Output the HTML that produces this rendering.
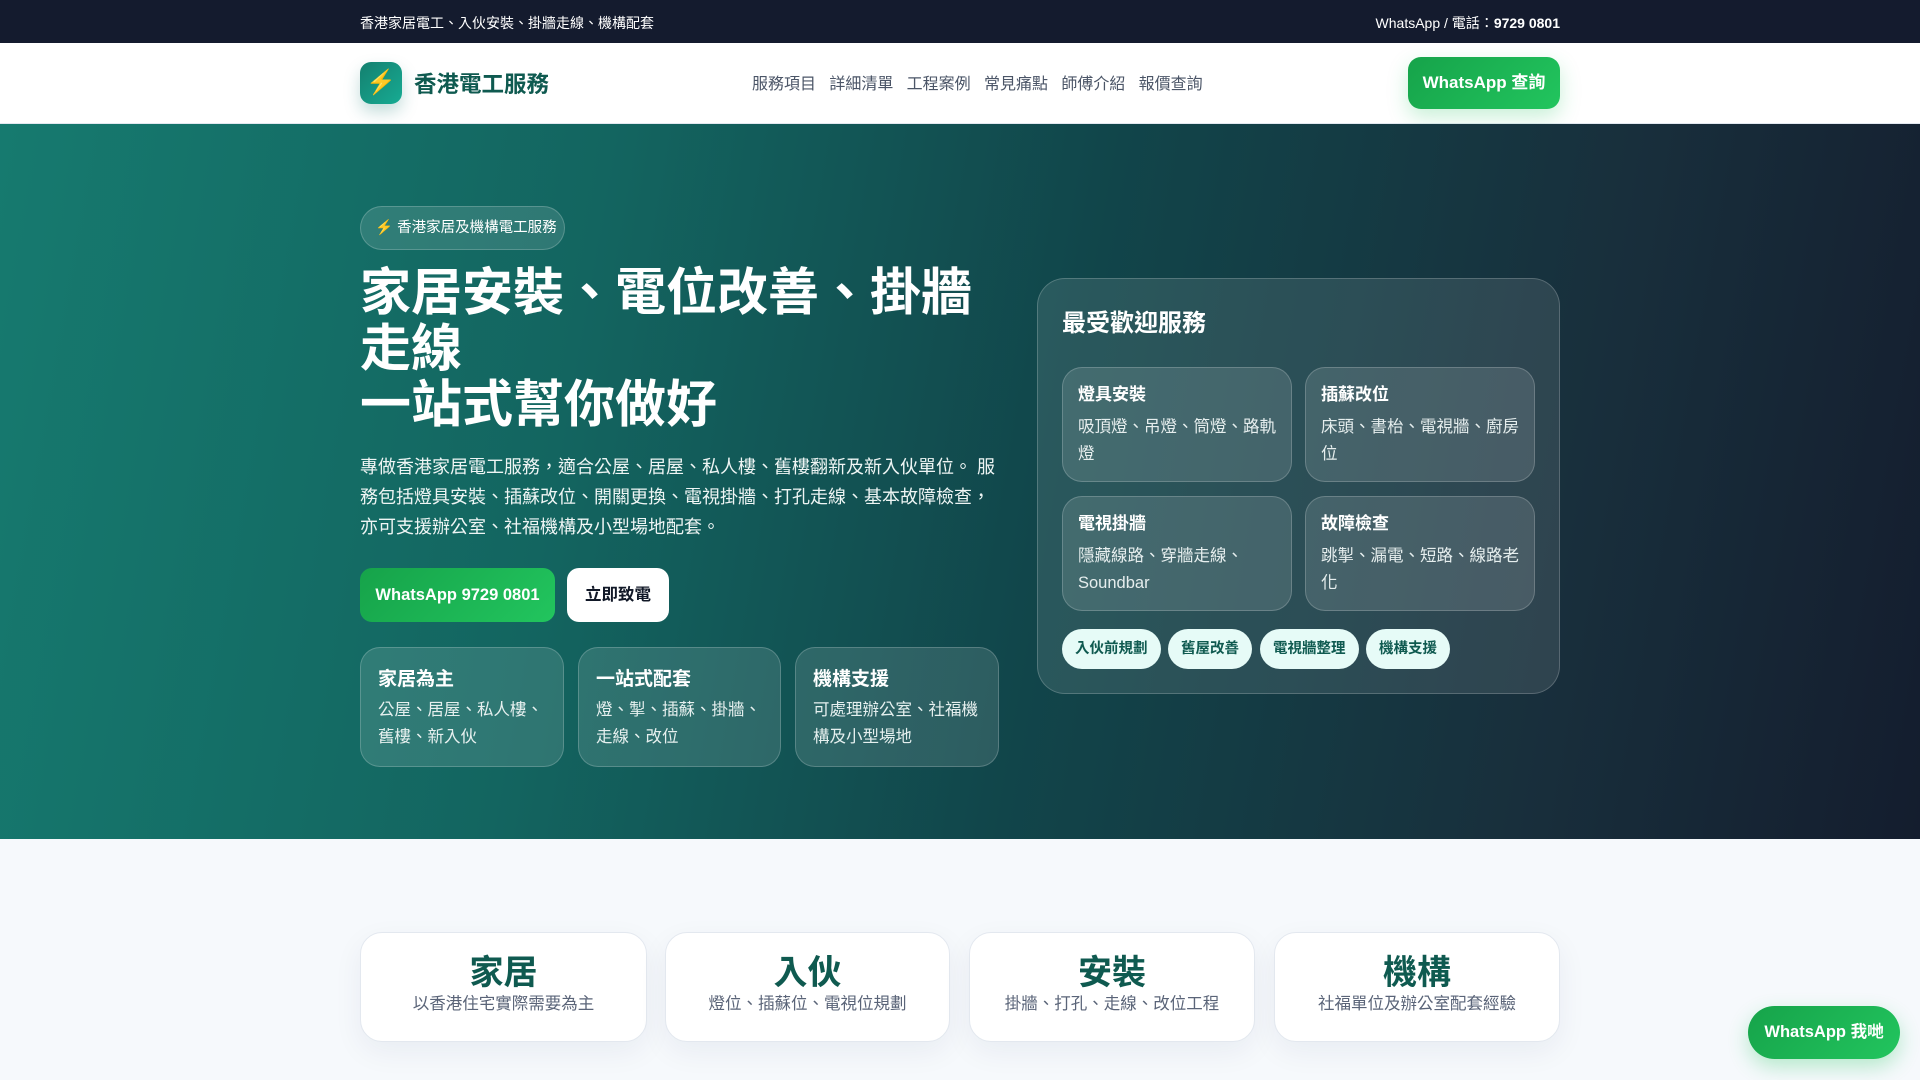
<!DOCTYPE html>
<html><head><meta charset="utf-8"><style>
*{box-sizing:border-box;margin:0;padding:0}
body{width:1920px;height:1080px;overflow:hidden;font-family:"Liberation Sans","Noto Sans CJK TC",sans-serif;background:#f6f9fc;position:relative}
.a{position:absolute}
.top{left:0;top:0;width:1920px;height:43px;background:#141b2e;color:#fff;font-size:14px}
.nav{left:0;top:43px;width:1920px;height:81px;background:#fff;border-bottom:1px solid #e2e8f0}
.hero{left:0;top:124px;width:1920px;height:715px;background:linear-gradient(100deg,#167a6f 0%,#136560 30%,#11454a 55%,#182f3c 80%,#141d2e 100%)}
.glass{background:rgba(255,255,255,0.12);border:1px solid rgba(255,255,255,0.2);border-radius:20px}
.sc h4{font-size:19px;color:#fff;font-weight:700;margin-bottom:6px}
.sc p{font-size:16.5px;line-height:27px;color:#e6f0ef}
.ic h4{font-size:17px;color:#fff;font-weight:700;margin-bottom:9px}
.ic p{font-size:16.5px;line-height:27px;color:#e6eeee}
.tag{height:40px;line-height:40px;border-radius:20px;background:#e6fbf7;color:#0f5a50;font-weight:700;font-size:14.5px;padding:0 13px;top:629px}
.bc{background:#fff;border:1px solid #e3e8ef;border-radius:22px;top:932px;height:110px;text-align:center;box-shadow:0 10px 30px rgba(20,40,80,0.06)}
.bc h3{font-size:34px;color:#0f5a50;font-weight:700;margin-top:20px;line-height:40px}
.bc p{font-size:16.5px;color:#5a6478;margin-top:-3px}
</style></head><body>
<div class="a top"><span class="a" style="left:360px;top:13px">香港家居電工、入伙安裝、掛牆走線、機構配套</span><span class="a" style="right:360px;top:13px">WhatsApp / 電話：<b>9729 0801</b></span></div>
<div class="a nav">
<div class="a" style="left:360px;top:19px;width:42px;height:42px;border-radius:11px;background:linear-gradient(135deg,#14806f,#17ab93);box-shadow:0 8px 16px rgba(20,120,110,0.25);color:#facc15;font-size:24px;text-align:center;line-height:42px">⚡</div>
<div class="a" style="left:414px;top:24px;font-size:22.5px;font-weight:700;color:#0f5a50">香港電工服務</div>
<div class="a" style="left:752px;top:27px;font-size:16px;color:#4b5567">服務項目&nbsp;&nbsp;&nbsp;詳細清單&nbsp;&nbsp;&nbsp;工程案例&nbsp;&nbsp;&nbsp;常見痛點&nbsp;&nbsp;&nbsp;師傅介紹&nbsp;&nbsp;&nbsp;報價查詢</div>
<div class="a" style="left:1408px;top:14px;width:152px;height:52px;border-radius:13px;background:linear-gradient(135deg,#16a34a,#22c55e);color:#fff;font-weight:700;font-size:17px;text-align:center;line-height:52px;box-shadow:0 8px 20px rgba(34,197,94,0.25)">WhatsApp 查詢</div>
</div>
<div class="a hero">
<div class="a glass" style="left:360px;top:82px;width:205px;height:44px;border-radius:22px;color:#fff;font-size:14.5px;line-height:42px;padding-left:14px"><span style="color:#facc15">⚡</span> 香港家居及機構電工服務</div>
<div class="a" style="left:360px;top:141px;width:640px;font-size:51px;line-height:56px;font-weight:700;color:#fff">家居安裝、電位改善、掛牆走線<br>一站式幫你做好</div>
<div class="a" style="left:360px;top:328px;width:645px;font-size:18px;line-height:30px;color:#eef5f4">專做香港家居電工服務，適合公屋、居屋、私人樓、舊樓翻新及新入伙單位。 服務包括燈具安裝、插蘇改位、開關更換、電視掛牆、打孔走線、基本故障檢查，亦可支援辦公室、社福機構及小型場地配套。</div>
<div class="a" style="left:360px;top:444px;width:195px;height:54px;border-radius:12px;background:linear-gradient(135deg,#16a34a,#22c55e);color:#fff;font-weight:700;font-size:16.5px;text-align:center;line-height:54px">WhatsApp 9729 0801</div>
<div class="a" style="left:567px;top:444px;width:102px;height:54px;border-radius:12px;background:#fff;color:#111827;font-weight:700;font-size:16.5px;text-align:center;line-height:54px">立即致電</div>
<div class="a glass sc" style="left:360px;top:523px;width:204px;height:120px;padding:16px 17px"><h4>家居為主</h4><p>公屋、居屋、私人樓、舊樓、新入伙</p></div>
<div class="a glass sc" style="left:578px;top:523px;width:203px;height:120px;padding:16px 17px"><h4>一站式配套</h4><p>燈、掣、插蘇、掛牆、走線、改位</p></div>
<div class="a glass sc" style="left:795px;top:523px;width:204px;height:120px;padding:16px 17px"><h4>機構支援</h4><p>可處理辦公室、社福機構及小型場地</p></div>
<div class="a glass" style="left:1037px;top:154px;width:523px;height:416px;border-radius:28px;background:rgba(255,255,255,0.1)"></div>
<div class="a" style="left:1062px;top:179px;font-size:24px;font-weight:700;color:#fff">最受歡迎服務</div>
<div class="a glass ic" style="left:1062px;top:243px;width:230px;height:115px;padding:12px 15px"><h4>燈具安裝</h4><p>吸頂燈、吊燈、筒燈、路軌燈</p></div>
<div class="a glass ic" style="left:1305px;top:243px;width:230px;height:115px;padding:12px 15px"><h4>插蘇改位</h4><p>床頭、書枱、電視牆、廚房位</p></div>
<div class="a glass ic" style="left:1062px;top:372px;width:230px;height:115px;padding:12px 15px"><h4>電視掛牆</h4><p>隱藏線路、穿牆走線、Soundbar</p></div>
<div class="a glass ic" style="left:1305px;top:372px;width:230px;height:115px;padding:12px 15px"><h4>故障檢查</h4><p>跳掣、漏電、短路、線路老化</p></div>
</div>
<div class="a tag" style="left:1062px">入伙前規劃</div>
<div class="a tag" style="left:1168px">舊屋改善</div>
<div class="a tag" style="left:1260px">電視牆整理</div>
<div class="a tag" style="left:1366px">機構支援</div>
<div class="a bc" style="left:360px;width:287px"><h3>家居</h3><p>以香港住宅實際需要為主</p></div>
<div class="a bc" style="left:665px;width:285px"><h3>入伙</h3><p>燈位、插蘇位、電視位規劃</p></div>
<div class="a bc" style="left:969px;width:286px"><h3>安裝</h3><p>掛牆、打孔、走線、改位工程</p></div>
<div class="a bc" style="left:1274px;width:286px"><h3>機構</h3><p>社福單位及辦公室配套經驗</p></div>
<div class="a" style="left:1748px;top:1006px;width:152px;height:53px;border-radius:27px;background:linear-gradient(135deg,#16a34a,#22c55e);color:#fff;font-weight:700;font-size:16.5px;text-align:center;line-height:53px;box-shadow:0 8px 20px rgba(34,197,94,0.3)">WhatsApp 我哋</div>
</body></html>
